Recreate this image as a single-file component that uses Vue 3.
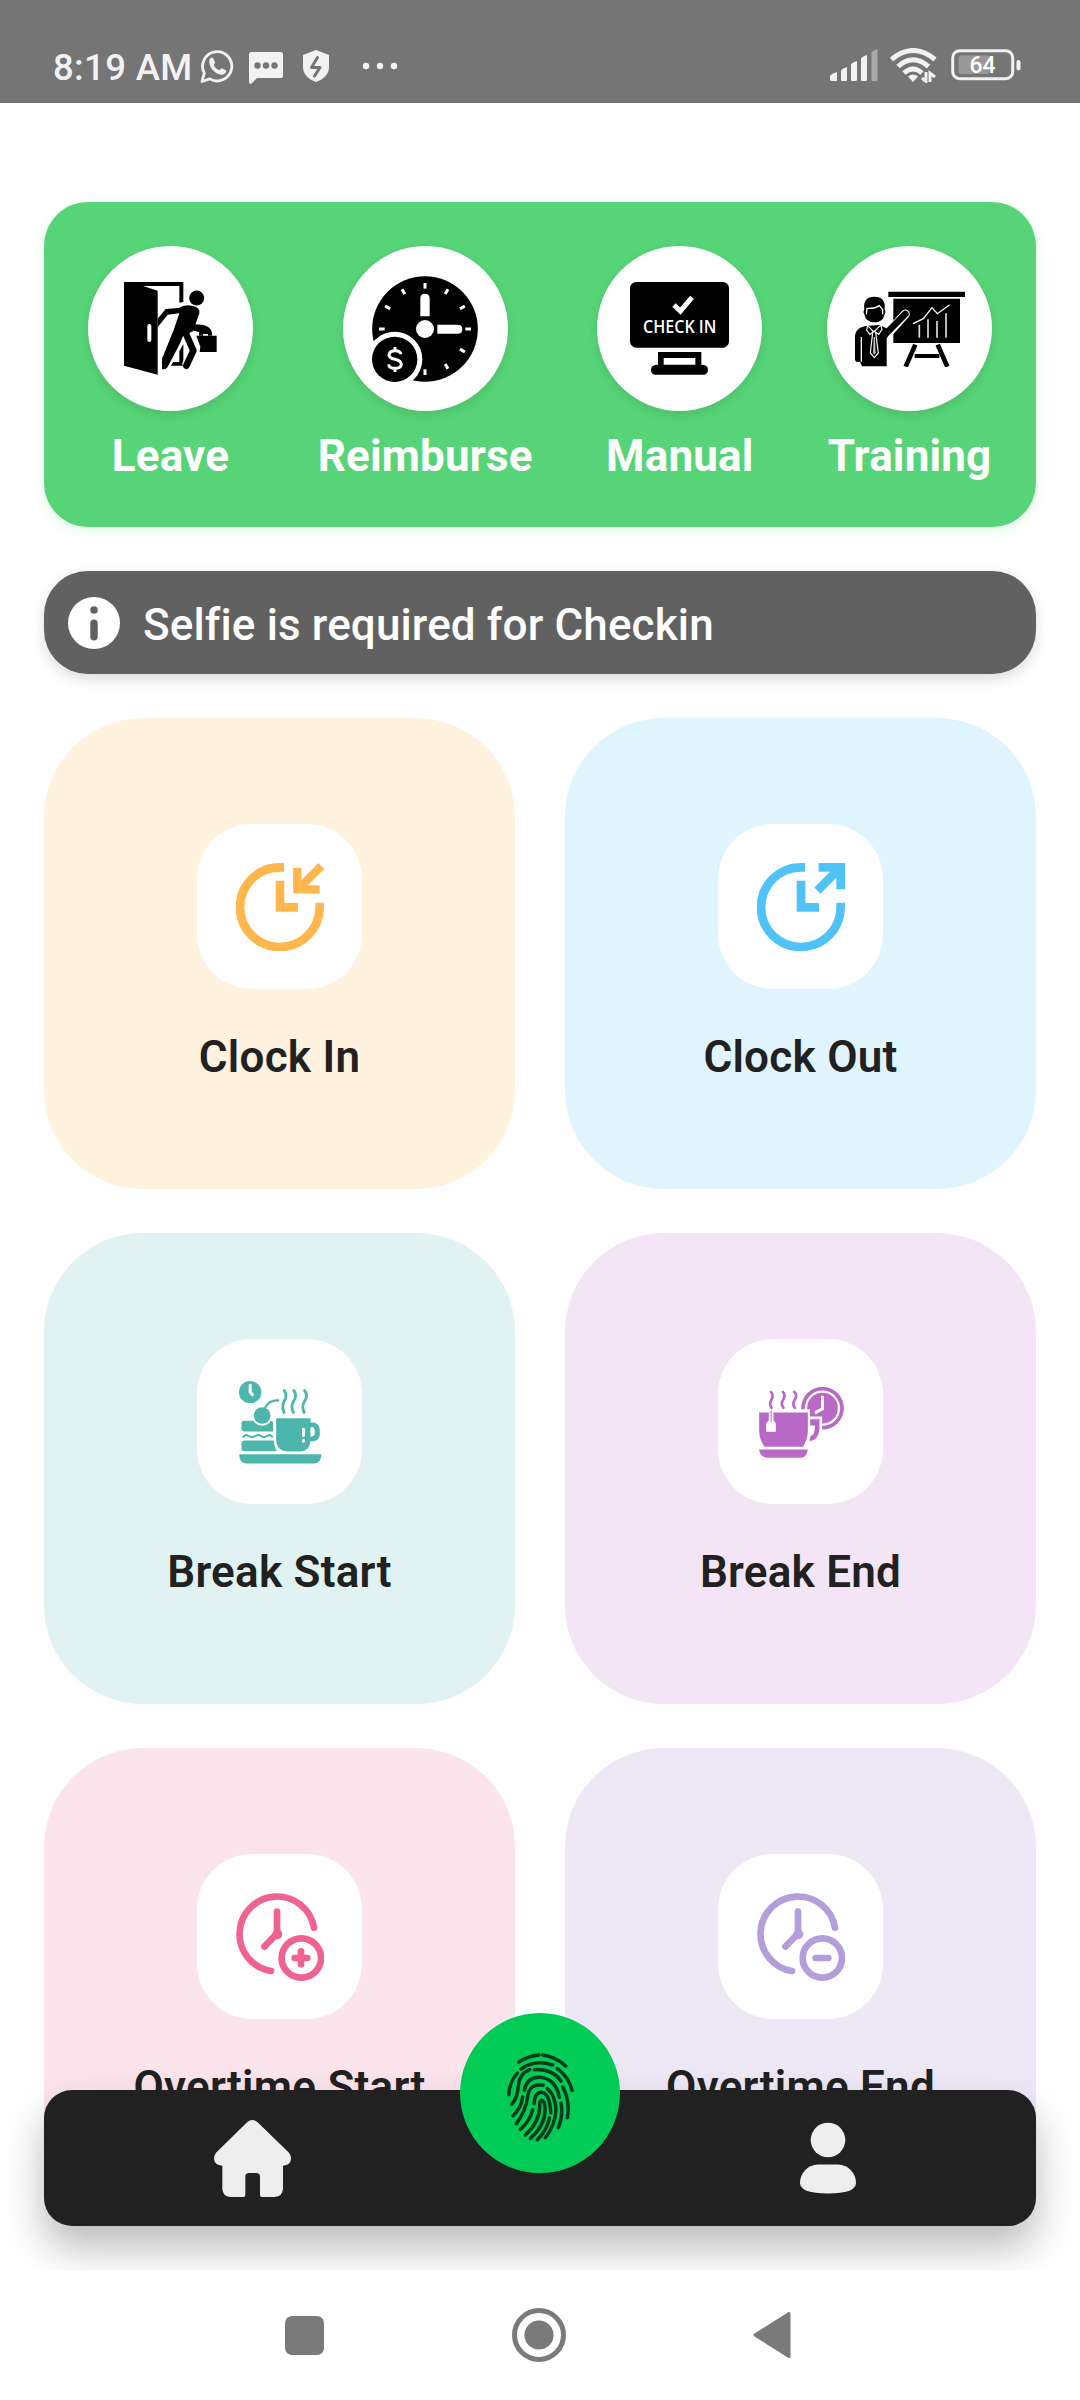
<script setup>
const cards = [
  { id: 'clock-in', label: 'Clock In', bg: '#fff2df', ink: '#ffb74d' },
  { id: 'clock-out', label: 'Clock Out', bg: '#e0f4fe', ink: '#4fc3f7' },
  { id: 'break-start', label: 'Break Start', bg: '#e0f2f1', ink: '#4db6ac' },
  { id: 'break-end', label: 'Break End', bg: '#f3e5f5', ink: '#ba68c8' },
  { id: 'overtime-start', label: 'Overtime Start', bg: '#fbe4ec', ink: '#f06292' },
  { id: 'overtime-end', label: 'Overtime End', bg: '#ede7f6', ink: '#b39ddb' },
]
const ticks = [0, 30, 60, 90, 120, 150, 180, 270, 300, 330]
</script>

<template>
  <div class="screen">
    <header class="status">
      <span class="time">8:19 AM</span>
      <svg class="wa" width="34" height="36" viewBox="0 0 34 36">
        <path d="M2 33.500l2.300-8.300A14.600 14.600 0 1 1 9.800 30.900z" fill="none" stroke="#f2f2f2" stroke-width="2.800" stroke-linejoin="round" />
        <path d="M9.500 11.500c1-2 2.600-2.200 3.600-1.400l2 4.200c.2 1-1.600 2.100-1.300 2.900 1 2.200 3 4 5.300 4.900 1 .2 2-2 2.900-1.900l4.100 2.200c.6 1.600-1.400 4.200-4.400 4.300C15 26.600 8 19 9.500 11.500z" fill="#f2f2f2" />
      </svg>
      <svg class="chat" width="34" height="32" viewBox="0 0 34 32">
        <path d="M2 0h30q2 0 2 2v22q0 2-2 2H8l-6 6q-2 0-2-2V2q0-2 2-2z" fill="#f2f2f2" />
        <g fill="#757575"><circle cx="8.500" cy="13.500" r="3.200" /><circle cx="17" cy="13.500" r="3.200" /><circle cx="25.500" cy="13.500" r="3.200" /></g>
      </svg>
      <svg class="shield" width="28" height="34" viewBox="0 0 28 34">
        <path d="M14 1l13 5v12c0 7-5 12-13 15C6 30 1 25 1 18V6z" fill="#f2f2f2" />
        <path d="M15.500 8.500L9.500 18.500H18L12.500 27" fill="none" stroke="#757575" stroke-width="3" stroke-linejoin="round" stroke-linecap="round" />
      </svg>
      <svg class="more" width="36" height="8" viewBox="0 0 36 8" fill="#f2f2f2">
        <circle cx="4" cy="4" r="3.200" /><circle cx="18" cy="4" r="3.200" /><circle cx="32" cy="4" r="3.200" />
      </svg>
      <div class="status-right">
        <svg width="48" height="32" viewBox="0 0 48 32" fill="#f2f2f2">
          <path d="M0 27l2-2 5-2v9H1.500Q0 32 0 30zM11 22q0-2 6-4v13q0 1-1 1h-4q-1 0-1-1zM21 16q0-2 6-4v19q0 1-1 1h-4q-1 0-1-1zM31 10q0-2 6-4v25q0 1-1 1h-4q-1 0-1-1z" />
          <path d="M41.500 4q0-2 6-4v31q0 1-1 1h-4q-1 0-1-1z" fill="#a8a8a8" />
        </svg>
        <svg class="wifi" width="47" height="35" viewBox="0 0 47 35">
          <g fill="none" stroke="#f2f2f2" stroke-width="5">
            <path d="M1.500 11.500Q23 -6.500 45 11.500" /><path d="M8 18.500Q23 5 38.500 18.500" /><path d="M14 25Q23 17 32 25" />
          </g>
          <path d="M18 28.500q5-4 10 0l-5 5.500z" fill="#f2f2f2" />
          <path d="M32 30l4 3.500V24M40 34v-9l5 4" fill="none" stroke="#f2f2f2" stroke-width="3" />
        </svg>
        <svg width="70" height="32" viewBox="0 0 70 32">
          <rect x="1.700" y="1.700" width="60" height="28" rx="7" fill="none" stroke="#f2f2f2" stroke-width="3" />
          <rect x="7.500" y="6.500" width="31" height="18.500" rx="3" fill="#999" />
          <rect x="65.500" y="11" width="4" height="10.500" rx="2" fill="#f2f2f2" />
          <text x="31.500" y="24" text-anchor="middle" textLength="26" class="battery">64</text>
        </svg>
      </div>
    </header>

    <main class="content">
      <section class="quick">
        <div class="quick-item">
          <div class="disc">
            <svg width="92.700" height="92.700" viewBox="283 276 278 278">
              <path d="M283 276H461V336L449 338V288H340L384 302V554L283 527Z" />
              <rect x="353" y="402" width="12" height="54" rx="6" fill="#fff" />
              <path d="M461 462V527H424L430 516H449V484Z" />
              <path d="M470 436L492 482 470 529" fill="none" stroke="#fff" stroke-width="30" />
              <circle cx="501" cy="324" r="22.500" />
              <path d="M447 354Q466 342 490 348 511 352 509 370L490 424 460 438 450 462 416 527Q410 540 397 537V506L432 420 449 370 414 374 384 412V386L408 357Z" />
              <path d="M470 434L491 482 470 527" fill="none" stroke="#000" stroke-width="20" stroke-linecap="round" stroke-linejoin="round" />
              <path d="M490 402L522 405Q544 412 547 428V437H535V432H520V437H508V426L488 421Z" />
              <path d="M500 437H561V486H510L512 470Z" />
            </svg>
          </div>
          <span>Leave</span>
        </div>
        <div class="quick-item">
          <div class="disc">
            <svg width="106" height="106" viewBox="1029 257 318 318">
              <circle cx="1188" cy="416" r="158.500" />
              <rect v-for="t in ticks" :key="t" x="1183.500" y="278" width="9" height="17" fill="#fff" :transform="`rotate(${t} 1188 416)`" />
              <g fill="#fff">
                <path d="M1174 378V324Q1174 310 1188 310T1202 324V378ZM1225 403H1286Q1300 403 1300 416.500T1286 430H1225Z" />
                <circle cx="1188" cy="416" r="27" />
                <circle cx="1097" cy="507" r="83" />
              </g>
              <circle cx="1097" cy="507" r="68" />
              <path d="M1116 492Q1114 481 1098 481T1080 493Q1080 503 1098 507T1117 522Q1116 534 1098 534T1079 522M1098 470V482M1098 533V545" fill="none" stroke="#fff" stroke-width="9" />
            </svg>
          </div>
          <span>Reimburse</span>
        </div>
        <div class="quick-item">
          <div class="disc">
            <svg width="99" height="92.700" viewBox="270 276 297 278">
              <rect x="270" y="276" width="297" height="197" rx="19" />
              <path d="M402 345L421 363 456 322" fill="none" stroke="#fff" stroke-width="15" />
              <text x="309" y="430" textLength="220" lengthAdjust="spacingAndGlyphs" class="checkin">CHECK IN</text>
              <path d="M354 486H484V524Q504 524 504 539T488 554H348Q333 554 333 539T354 524ZM371 504V524H466V504Z" fill-rule="evenodd" />
            </svg>
          </div>
          <span>Manual</span>
        </div>
        <div class="quick-item">
          <div class="disc">
            <svg width="110" height="76" viewBox="945 302 330 228">
              <path d="M1045 304H1275V320H1045ZM1060 325H1260V458H1060Z" />
              <path d="M1119 400L1150 385 1176 352 1192 370 1229 343" fill="none" stroke="#fff" stroke-width="4" />
              <path d="M1138 403V442M1164 387V442M1191 392V442M1218 369V442" stroke="#ddd" stroke-width="5" />
              <path d="M1126 463L1097 529M1193 463L1222 529" stroke="#000" stroke-width="14" />
              <path d="M1124 497H1198" stroke="#000" stroke-width="12" />
              <path d="M1034 440L1096 371" stroke="#fff" stroke-width="27" stroke-linecap="round" />
              <path d="M1022 446L1096 371" stroke="#000" stroke-width="20" stroke-linecap="round" />
              <path d="M983 406Q945 410 945 440V508Q946 517 960 514L966 528H1040V445L1050 420 1020 404Z" />
              <path d="M964 440V514" stroke="#fff" stroke-width="4" />
              <path d="M973 357Q968 319 1003 319T1034 357Q1038 363 1034 372 1028 398 1003 396 977 396 973 372 968 364 973 357Z" />
              <path d="M979 372L981 354Q1004 356 1018 346L1028 358V372" fill="none" stroke="#fff" stroke-width="4" />
              <path d="M980 403L1001 425 1024 403M984 398L980 420 990 432 1002 422 1016 432 1026 418 1021 398M998 426L991 488 1003 502 1015 488 1007 426" fill="none" stroke="#fff" stroke-width="3.500" />
              <path d="M1001 440L999 488 1003 493 1007 488 1005 440Z" fill="#bbb" />
            </svg>
          </div>
          <span>Training</span>
        </div>
      </section>

      <section class="notice">
        <svg width="52" height="52" viewBox="0 0 52 52">
          <circle cx="26" cy="26" r="26" fill="#fff" />
          <circle cx="26" cy="13" r="3.800" fill="#616161" />
          <rect x="22.300" y="22.500" width="7.400" height="21" rx="3.700" fill="#616161" />
        </svg>
        <span>Selfie is required for Checkin</span>
      </section>

      <section class="grid">
        <article v-for="c in cards" :key="c.id" class="card" :style="{ background: c.bg, color: c.ink }">
          <div class="tile">
            <svg v-if="c.id === 'clock-in'" width="88" height="88" viewBox="168 188 264 264" fill="none" stroke="currentColor">
              <path d="M312 201H300A119.500 119.500 0 1 0 419 320V307" stroke-width="26" />
              <path d="M300 241V321H354" stroke-width="26" />
              <path d="M352 202V267H419M354 267L424 197" stroke-width="25" />
            </svg>
            <svg v-else-if="c.id === 'clock-out'" width="88" height="88" viewBox="171 188 264 264" fill="none" stroke="currentColor">
              <path d="M315 201H303A119.500 119.500 0 1 0 422 320V307" stroke-width="26" />
              <path d="M303 241V321H357" stroke-width="26" />
              <path d="M356 201H422V267M420 203L352 271" stroke-width="26" />
            </svg>
            <svg v-else-if="c.id === 'break-start'" width="88" height="88" viewBox="137.500 142.500 264 264" fill="currentColor">
              <circle cx="180" cy="185" r="33.500" />
              <path d="M180 164V185L187 193" fill="none" stroke="#fff" stroke-width="9" stroke-linecap="round" />
              <path d="M162 271H240Q249 271 249 280V303H162Q154 303 154 295V279Q154 271 162 271Z" />
              <circle cx="216" cy="255" r="31" fill="#fff" />
              <circle cx="216" cy="255" r="25" />
              <path d="M223 235Q236 208 264 210" fill="none" stroke="currentColor" stroke-width="7" stroke-linecap="round" />
              <path d="M157 320L168 313 186 321 204 313 222 321 238 313 248 320" fill="none" stroke="currentColor" stroke-width="6" />
              <path d="M162 330H251Q252 350 260 362H162Q154 362 154 354V338Q154 330 162 330Z" />
              <path d="M258 263H361V276H370Q389 279 389 300V312Q388 330 369 332H361Q357 362 330 363H290Q258 360 258 325Z" />
              <path d="M361 290H369Q374 293 374 300V309Q374 317 361 319Z" fill="#fff" />
              <path d="M340 296V315M340 329V332" stroke="#fff" stroke-width="9" stroke-linecap="round" />
              <path d="M147 371H394Q393 399 370 399H170Q147 398 147 371Z" />
              <path d="M282 180Q293 194 283 211T282 246M311 180Q322 194 311 211T310 246M343 180Q355 194 344 211T342 246" fill="none" stroke="currentColor" stroke-width="8.500" stroke-linecap="round" />
            </svg>
            <svg v-else-if="c.id === 'break-end'" width="88" height="88" viewBox="140.500 142.500 264 264" fill="currentColor">
              <circle cx="337" cy="233" r="64" />
              <circle cx="337" cy="233" r="53" fill="#fff" />
              <circle cx="337" cy="233" r="46" />
              <path d="M337 196V235L314 247" fill="none" stroke="#fff" stroke-width="9" />
              <path d="M140 236H299V258H336V300Q332 334 296 342H140Z" fill="#fff" />
              <path d="M300 266H328V294Q325 330 298 332L300 318Q314 312 314 293V285H300Z" />
              <path d="M147 246H293V300Q293 326 278 349H163Q147 326 147 300ZM147 357H293Q290 382 270 382H172Q149 380 147 357Z" />
              <path d="M176 246H190V269L197 278V304H168V278L176 269Z" fill="#fff" />
              <path d="M183 240V274" stroke="currentColor" stroke-width="3" />
              <path d="M182 184Q192 194 184 207T184 232M218 184Q228 194 219 207T220 232M252 184Q263 194 254 207T254 232" fill="none" stroke="currentColor" stroke-width="8" stroke-linecap="round" />
            </svg>
            <svg v-else width="88" height="88" viewBox="617 158 264 264" fill="none" stroke="currentColor" stroke-width="20" stroke-linecap="round">
              <path d="M722 392A112.500 112.500 0 1 1 851 262" />
              <path d="M740 214V280L702 319" stroke-linejoin="round" />
              <circle cx="741" cy="282" r="5" />
              <circle cx="813" cy="353" r="59" />
              <path d="M793 353H831" />
              <path v-if="c.id === 'overtime-start'" d="M812 333V372" />
            </svg>
          </div>
          <span class="card-label">{{ c.label }}</span>
        </article>
      </section>

      <nav class="tabbar">
        <svg class="home" width="77" height="77" viewBox="0 0 231 231">
          <path d="M100 6Q115-6 130 6L225 98Q231 106 231 117 229 136 207 137V207Q205 230 182 231H144Q138 231 138 225V170Q138 159 127 159H105Q94 159 94 170V225Q94 231 88 231H49Q27 230 25 207V137Q2 136 0 117 0 106 6 98Z" fill="#eee" />
        </svg>
        <svg class="user" width="56" height="72" viewBox="0 0 56 72" fill="#eee">
          <circle cx="28" cy="18" r="17.300" />
          <path d="M18 42.500H38C49 42.500 56 52 56 61 56 68 46 71.500 28 71.500S0 68 0 61C0 52 7 42.500 18 42.500Z" />
        </svg>
        <div class="fab">
          <svg width="68" height="90" viewBox="198 188 204 270" fill="none" stroke="#0b3a1d" stroke-width="10.500" stroke-linecap="round">
            <path d="M237 218Q265 199 297 197M308 197Q345 201 377 230M243 239Q285 209 338 227M352 238Q386 262 396 303M232 251Q208 280 206 316M269 241Q238 253 235 290T215 345M283 241Q338 238 363 275M368 293Q391 335 382 385M253 303Q262 262 300 264 347 268 358 324M248 322Q244 355 219 379M309 288Q268 280 263 322T229 403M322 298Q346 318 348 362 345 408 316 445M363 342Q370 380 355 415M282 343Q284 309 305 309 330 314 332 370M278 361Q270 395 241 420M299 341Q303 325 313 340 325 400 271 447M299 341Q303 395 256 437M328 386Q322 422 292 451" />
          </svg>
        </div>
      </nav>
    </main>

    <footer class="sysnav">
      <svg width="39" height="39" viewBox="0 0 39 39"><rect width="39" height="39" rx="7" fill="#7a7a7a" /></svg>
      <svg width="54" height="54" viewBox="0 0 54 54"><circle cx="27" cy="27" r="24.500" fill="none" stroke="#7a7a7a" stroke-width="5" /><circle cx="27" cy="27" r="14.600" fill="#7a7a7a" /></svg>
      <svg width="38" height="46" viewBox="0 0 38 46"><path d="M36 1.500V44.500L2 23Z" fill="#7a7a7a" stroke="#7a7a7a" stroke-width="3" stroke-linejoin="round" /></svg>
    </footer>
  </div>
</template>

<style>
body { margin: 0; background: #fff; }
</style>

<style scoped>
.screen {
  width: 1080px;
  height: 2400px;
  overflow: hidden;
  display: flex;
  flex-direction: column;
  background: #fff;
  font-family: Roboto, "Liberation Sans", sans-serif;
}
svg { display: block; flex: none; }
.status {
  box-sizing: border-box;
  height: 103px;
  flex: none;
  padding: 32px 59px 0 53px;
  display: flex;
  align-items: center;
  background: #757575;
  color: #f2f2f2;
}
.time { width: 147px; font-size: 36.500px; line-height: 42px; font-weight: 500; letter-spacing: 0.350px; white-space: nowrap; }
.wa { margin-top: -4px; }
.chat { margin-left: 15px; }
.shield { margin-left: 19px; margin-top: -3px; }
.more { margin-left: 32px; margin-top: -3px; }
.status-right { margin-left: auto; margin-top: -5px; display: flex; align-items: center; }
.wifi { margin: 0 14px 0 12px; }
.battery { font-size: 23px; font-weight: 500; fill: #fff; }
.content {
  box-sizing: border-box;
  position: relative;
  height: 2167px;
  flex: none;
  padding: 99px 44px 0;
  overflow: hidden;
}
.quick {
  box-sizing: border-box;
  height: 325px;
  padding: 44px;
  display: flex;
  justify-content: space-between;
  border-radius: 44px;
  background: #57d477;
  box-shadow: 0 4px 12px rgba(88, 235, 130, 0.2);
}
.quick-item {
  display: flex;
  flex-direction: column;
  align-items: center;
  gap: 19px;
  color: #fff;
  font-size: 44px;
  line-height: 52px;
  font-weight: 700;
  letter-spacing: 0.150px;
}
.disc {
  width: 165px;
  height: 165px;
  display: flex;
  align-items: center;
  justify-content: center;
  border-radius: 50%;
  background: #fff;
  box-shadow: 0 4px 10px rgba(0, 0, 0, 0.11);
}
.checkin { font: 600 52px "Open Sans", sans-serif; fill: #fff; letter-spacing: 0; }
.notice {
  box-sizing: border-box;
  height: 103px;
  margin-top: 44px;
  padding: 0 24px;
  display: flex;
  align-items: center;
  gap: 23px;
  border-radius: 44px;
  background: #616161;
  color: #fff;
  font-size: 44px;
  font-weight: 500;
  line-height: 52px;
  letter-spacing: 0.140px;
  font-variant-ligatures: common-ligatures;
  box-shadow: 0 5px 14px rgba(0, 0, 0, 0.14);
}
.notice span { padding-top: 4px; }
.grid {
  margin-top: 44px;
  display: grid;
  grid-template-columns: 471px 471px;
  grid-auto-rows: 471px;
  gap: 44px 50px;
}
.card {
  display: flex;
  flex-direction: column;
  align-items: center;
  justify-content: center;
  gap: 42px;
  border-radius: 99px;
  box-shadow: 0 5px 14px rgba(0, 0, 0, 0.015);
}
.tile {
  width: 165px;
  height: 165px;
  display: flex;
  align-items: center;
  justify-content: center;
  border-radius: 55px;
  background: #fff;
}
.card-label { color: #212121; font-size: 44px; line-height: 52px; font-weight: 600; letter-spacing: 0.250px; }
.tabbar {
  box-sizing: border-box;
  position: absolute;
  left: 44px;
  right: 44px;
  bottom: 44px;
  height: 136px;
  padding: 0 180px 0 170px;
  display: flex;
  align-items: center;
  justify-content: space-between;
  border-radius: 28px;
  background: #212121;
  box-shadow: 0 22px 42px rgba(0, 0, 0, 0.27);
}
.fab {
  position: absolute;
  left: 416px;
  top: -77px;
  width: 160px;
  height: 160px;
  display: flex;
  align-items: center;
  justify-content: center;
  border-radius: 50%;
  background: #00cc55;
}
.fab svg { margin-top: 8px; }
.sysnav {
  flex: 1;
  padding: 0 289px 0 285px;
  display: flex;
  align-items: center;
  justify-content: space-between;
  background: #fff;
}
</style>
